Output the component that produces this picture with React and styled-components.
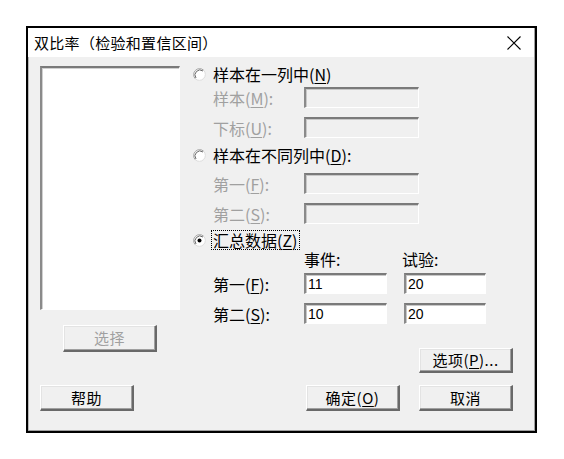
import React from "react"
import styled, { createGlobalStyle } from "styled-components"

const Global = createGlobalStyle`
  html, body {
    margin: 0;
    padding: 0;
    background: #ffffff;
  }
  body {
    font-family: "Noto Sans CJK SC", "Noto Sans", sans-serif;
  }
`

const Dialog = styled.div`
  margin: 26px 0 0 26px;
  width: 511px;
  height: 407px;
  box-sizing: border-box;
  border: 2px solid #000;
  background: #f0f0f0;
  display: flex;
  flex-direction: column;
  box-shadow: inset -1px -1px 0 #a0a0a0, inset 1px 0 0 #b8b8b8;
`

const TitleBar = styled.div`
  height: 29px;
  background: #ffffff;
  display: flex;
  align-items: center;
  justify-content: space-between;
  padding: 0 13px 0 6px;
  margin-right: 1px;
  font-size: 15px;
  letter-spacing: 0.3px;
  line-height: 29px;
  color: #000;
`

const Body = styled.div`
  flex: 1;
  display: flex;
  flex-direction: column;
  padding: 9px 22px 19px 12px;
`

const Top = styled.div`
  display: flex;
  height: 307px;
`

const LeftCol = styled.div`
  width: 140px;
  display: flex;
  flex-direction: column;
`

const ListBox = styled.div`
  height: 244px;
  box-sizing: border-box;
  background: #fff;
  border-style: solid;
  border-width: 2px 1px 1px 2px;
  border-color: #7a7a7a #ffffff #ffffff #8a8a8a;
  box-shadow: inset 1px 1px 0 #d0d0d0;
`

const Button = styled.div`
  width: 94px;
  height: ${p => p.$h || 26}px;
  box-sizing: border-box;
  display: flex;
  align-items: center;
  justify-content: center;
  background: #f0f0f0;
  border-style: solid;
  border-width: 1px 2px 2px 1px;
  border-color: #ffffff #696969 #696969 #ffffff;
  box-shadow: inset -1px -1px 0 #a0a0a0, inset 1px 1px 0 #e3e3e3;
  font-size: 15px;
  line-height: 20px;
  color: ${p => (p.$disabled ? "#a0a0a0" : "#000")};
  letter-spacing: 0.5px;
`

const SelectButton = styled(Button)`
  margin: 15px 0 0 23px;
`

const RightCol = styled.div`
  flex: 1;
  margin-left: 13px;
  display: flex;
  flex-direction: column;
`

const RadioRow = styled.div`
  display: flex;
  align-items: center;
  height: 16px;
  margin-top: ${p => p.$mt || 0}px;
  font-size: 16px;
  line-height: 16px;
  color: #000;
  gap: 7px;
`

const Focus = styled.span`
  outline: 1px dotted #000;
  outline-offset: 1px;
`

const FieldRow = styled.div`
  display: flex;
  align-items: center;
  margin-top: ${p => p.$mt || 0}px;
  padding-left: 20px;
`

const Label = styled.div`
  width: ${p => p.$w || 91}px;
  font-size: 16px;
  line-height: 18px;
  color: ${p => (p.$disabled ? "#a0a0a0" : "#000")};
`

const Input = styled.div`
  width: ${p => p.$w || 115}px;
  height: 21px;
  box-sizing: border-box;
  background: ${p => (p.$disabled ? "#f0f0f0" : "#fff")};
  border-style: solid;
  border-width: 2px 1px 1px 2px;
  border-color: #7a7a7a #ffffff #ffffff #8a8a8a;
  box-shadow: inset 1px 1px 0 #c8c8c8;
  font-family: "Liberation Sans", Arial, sans-serif;
  font-size: 14px;
  line-height: 18px;
  padding-left: 2px;
  color: #000;
  margin-right: ${p => p.$mr || 0}px;
`

const Header = styled.div`
  display: flex;
  margin-top: 3px;
  padding-left: 111px;
  font-size: 16px;
  line-height: 16px;
  height: 16px;
  span:first-child {
    width: 98px;
  }
`

const OptionButton = styled(Button)`
  align-self: flex-end;
  margin-top: 24px;
`

const BottomRow = styled.div`
  display: flex;
  margin-top: 12px;
  gap: 19px;
  & > :first-child {
    margin-right: auto;
  }
`

const Key = styled.span`
  text-decoration: underline;
  text-underline-offset: 2px;
`

function Radio({ checked }) {
  return (
    <svg width="13" height="13" viewBox="0 0 13 13">
      <circle cx="6.5" cy="6.5" r="6" fill="#fff" />
      <path d="M2.26 10.74 A6 6 0 0 1 10.74 2.26" stroke="#a0a0a0" strokeWidth="1" fill="none" />
      <path d="M3.0 10.0 A5 5 0 0 1 10.0 3.0" stroke="#696969" strokeWidth="1" fill="none" />
      <path d="M10.74 2.26 A6 6 0 0 1 2.26 10.74" stroke="#dcdcdc" strokeWidth="1" fill="none" />
      {checked && <circle cx="6.5" cy="6.5" r="2" fill="#000" />}
    </svg>
  )
}

function Close() {
  return (
    <svg width="14" height="14" viewBox="0 0 14 14">
      <path d="M0.5 0.5 L13.5 13.5 M13.5 0.5 L0.5 13.5" stroke="#000" strokeWidth="1.1" />
    </svg>
  )
}

function Acc({ children, k }) {
  return <>{children}(<Key>{k}</Key>)</>
}

export default function App() {
  return (
    <>
      <Global />
      <Dialog>
        <TitleBar>
          <span>双比率（检验和置信区间）</span>
          <Close />
        </TitleBar>
        <Body>
          <Top>
            <LeftCol>
              <ListBox />
              <SelectButton $disabled $h={27}>选择</SelectButton>
            </LeftCol>
            <RightCol>
              <RadioRow>
                <Radio />
                <span><Acc k="N">样本在一列中</Acc></span>
              </RadioRow>
              <FieldRow $mt={5}>
                <Label $disabled><Acc k="M">样本</Acc>:</Label>
                <Input $disabled />
              </FieldRow>
              <FieldRow $mt={9}>
                <Label $disabled><Acc k="U">下标</Acc>:</Label>
                <Input $disabled />
              </FieldRow>
              <RadioRow $mt={9}>
                <Radio />
                <span><Acc k="D">样本在不同列中</Acc>:</span>
              </RadioRow>
              <FieldRow $mt={10}>
                <Label $disabled><Acc k="F">第一</Acc>:</Label>
                <Input $disabled />
              </FieldRow>
              <FieldRow $mt={9}>
                <Label $disabled><Acc k="S">第二</Acc>:</Label>
                <Input $disabled />
              </FieldRow>
              <RadioRow $mt={8}>
                <Radio checked />
                <Focus><Acc k="Z">汇总数据</Acc></Focus>
              </RadioRow>
              <Header>
                <span>事件:</span>
                <span>试验:</span>
              </Header>
              <FieldRow $mt={6}>
                <Label><Acc k="F">第一</Acc>:</Label>
                <Input $w={83} $mr={17}>11</Input>
                <Input $w={82}>20</Input>
              </FieldRow>
              <FieldRow $mt={9}>
                <Label><Acc k="S">第二</Acc>:</Label>
                <Input $w={83} $mr={17}>10</Input>
                <Input $w={82}>20</Input>
              </FieldRow>
              <OptionButton><Acc k="P">选项</Acc>...</OptionButton>
            </RightCol>
          </Top>
          <BottomRow>
            <Button>帮助</Button>
            <Button><Acc k="O">确定</Acc></Button>
            <Button>取消</Button>
          </BottomRow>
        </Body>
      </Dialog>
    </>
  )
}
